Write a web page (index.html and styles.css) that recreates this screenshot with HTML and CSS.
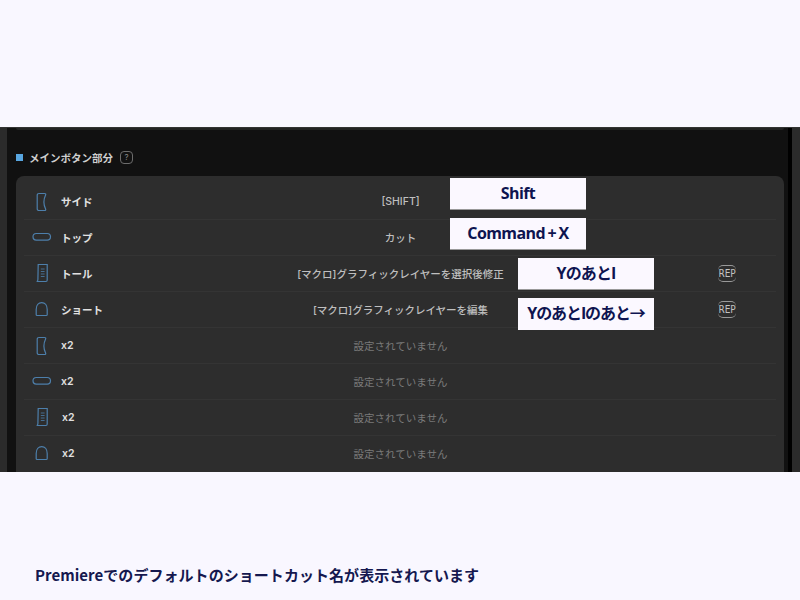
FILE: index.html
```html
<!DOCTYPE html>
<html lang="ja">
<head>
<meta charset="utf-8">
<title>メインボタン部分</title>
<link rel="stylesheet" href="styles.css">
</head>
<body>
<svg class="defs" width="0" height="0" aria-hidden="true">
  <symbol id="i-side" viewBox="0 0 12 20"><path d="M3 1.5H8.5C9.6 1.5 10 2.2 9.6 3C7.4 7.5 7.4 12.5 9.6 17C10 17.8 9.6 18.5 8.5 18.5H3C1.9 18.5 1.2 17.8 1.2 16.7V3.3C1.2 2.2 1.9 1.5 3 1.5Z"/></symbol>
  <symbol id="i-top" viewBox="0 0 20 10"><rect x="1" y="1.5" width="17.5" height="6.6" rx="3.3"/></symbol>
  <symbol id="i-tall" viewBox="0 0 14 20"><path d="M3.2 1.5H12.2V17C12.2 18 11.8 18.5 11 18.5H1.6C2.6 18.5 2.9 17.5 2.9 16.5Z"/><path class="thin" d="M5.8 6H9.6M5.8 8.5H9.6M5.8 11H9.6M5.8 13.5H9.6"/></symbol>
  <symbol id="i-short" viewBox="0 0 14 16"><path d="M2.2 14.5C1.5 14.5 1.2 14 1.2 13.4V8.5C1.2 4.2 3.6 1.6 6.7 1.6C9.8 1.6 12.2 4.2 12.2 8.5V13.4C12.2 14 11.9 14.5 11.2 14.5Z"/></symbol>
</svg>
<main class="shot">
  <section class="panel">
    <div class="sidebar"></div>
    <div class="content">
      <div class="stub"></div>
      <h2 class="heading"><span class="bullet"></span>メインボタン部分<span class="help">?</span></h2>
      <div class="card">
        <div class="row"><svg class="icon side"><use href="#i-side"/></svg><span class="name">サイド</span><span class="action">[SHIFT]</span></div>
        <div class="row"><svg class="icon top"><use href="#i-top"/></svg><span class="name">トップ</span><span class="action">カット</span></div>
        <div class="row"><svg class="icon tall"><use href="#i-tall"/></svg><span class="name">トール</span><span class="action">[マクロ]グラフィックレイヤーを選択後修正</span><span class="rep">REP</span></div>
        <div class="row"><svg class="icon short"><use href="#i-short"/></svg><span class="name">ショート</span><span class="action">[マクロ]グラフィックレイヤーを編集</span><span class="rep">REP</span></div>
        <div class="row"><svg class="icon side"><use href="#i-side"/></svg><span class="name">x2</span><span class="action none">設定されていません</span></div>
        <div class="row"><svg class="icon top"><use href="#i-top"/></svg><span class="name">x2</span><span class="action none">設定されていません</span></div>
        <div class="row lower"><svg class="icon tall"><use href="#i-tall"/></svg><span class="name">x2</span><span class="action none">設定されていません</span></div>
        <div class="row lower"><svg class="icon short"><use href="#i-short"/></svg><span class="name">x2</span><span class="action none">設定されていません</span></div>
      </div>
    </div>
    <div class="gutter"></div>
    <div class="sidebar right"></div>
    <div class="note n1">Shift</div>
    <div class="note n2">Command + X</div>
    <div class="note n3">YのあとI</div>
    <div class="note n4">YのあとIのあと→</div>
  </section>
  <p class="caption">Premiereでのデフォルトのショートカット名が表示されています</p>
</main>
</body>
</html>
```
FILE: styles.css
```css
* { box-sizing: border-box; }
html, body { margin: 0; height: 100%; }
body {
  background: #f9f7ff;
  font-family: Inter, "Noto Sans CJK JP", sans-serif;
  overflow: hidden;
}
.defs { position: absolute; }
.shot { width: 800px; height: 600px; display: flex; flex-direction: column; padding-top: 127px; }
.panel {
  position: relative;
  height: 345px;
  display: flex;
  overflow: hidden;
  background: #111;
  border-top: 1px solid #333;
}
.sidebar { width: 7px; background: #2b2b2b; flex: none; }
.sidebar.right { width: 8px; }
.gutter { width: 4px; background: #000; flex: none; }
.content { flex: 1; padding: 0 4px 0 9px; min-width: 0; }
.stub { height: 2px; background: #232323; border-radius: 0 0 6px 6px; }
.heading {
  display: flex;
  align-items: center;
  height: 46px;
  margin: 0;
  padding-top: 8px;
  font-size: 10.5px;
  font-weight: 600;
  color: #cfcfcf;
}
.bullet { width: 7px; height: 7px; background: #58a6e0; margin-right: 6px; }
.help {
  width: 13px; height: 13px;
  margin-left: 7px;
  border: 1px solid #6c6c6c;
  border-radius: 4px;
  font-size: 8px;
  line-height: 11px;
  text-align: center;
  color: #888;
  font-weight: 400;
}
.card {
  background: #2d2d2d;
  border-radius: 8px 8px 0 0;
  padding: 8px 8px 0;
  height: 310px;
}
.row {
  position: relative;
  display: flex;
  align-items: center;
  height: 36px;
  padding: 0 0 1px 37px;
  border-bottom: 1px solid #343434;
}
.row.lower { padding-left: 38px; }
.row:last-child { border-bottom-color: transparent; }
.icon {
  position: absolute;
  fill: none;
  stroke: #4d7fab;
  stroke-width: 1.2;
}
.icon.side { left: 12px; top: 8px; width: 12px; height: 20px; }
.icon.top { left: 8px; top: 12px; width: 20px; height: 10px; }
.icon.tall { left: 11px; top: 7px; width: 14px; height: 20px; }
.icon.short { left: 11px; top: 9px; width: 14px; height: 16px; }
.thin { stroke-width: 0.8; }
.name { font-size: 10.5px; font-weight: 600; color: #e0e0e0; }
.action {
  position: absolute;
  left: 1px;
  right: 0;
  text-align: center;
  font-size: 10.5px;
  font-weight: 500;
  color: #bfbfbf;
}
.action.none { color: #7a7a7a; font-weight: 400; }
.rep {
  position: absolute;
  right: 40px;
  top: 9px;
  width: 18px;
  height: 17px;
  border-top: 1px solid #999;
  border-bottom: 1px solid #999;
  border-radius: 5px;
  font-family: "DejaVu Sans Condensed", "DejaVu Sans", sans-serif;
  font-size: 10px;
  letter-spacing: -0.2px;
  line-height: 15px;
  text-align: center;
  color: #c2c2c2;
}
.note {
  position: absolute;
  height: 32px;
  background: #fbf8ff;
  color: #0e1450;
  font-family: "Open Sans", "Noto Sans CJK JP", sans-serif;
  font-weight: 700;
  font-size: 16px;
  line-height: 31px;
  text-align: center;
  letter-spacing: -0.6px;
  word-spacing: -1px;
  border-bottom: 1px solid #999;
}
.n1 { left: 450px; top: 50px; width: 136px; }
.n2 { left: 450px; top: 90px; width: 136px; }
.n3 { left: 518px; top: 130px; width: 136px; letter-spacing: -0.9px; }
.n4 { left: 518px; top: 170px; width: 136px; letter-spacing: -1.1px; border-bottom: 0; }
.caption {
  margin: 92px 0 0 35px;
  font-family: "Noto Sans CJK JP", sans-serif;
  font-size: 15px;
  line-height: 22px;
  font-weight: 700;
  color: #15184f;
  letter-spacing: 0.05px;
  white-space: nowrap;
}
```
